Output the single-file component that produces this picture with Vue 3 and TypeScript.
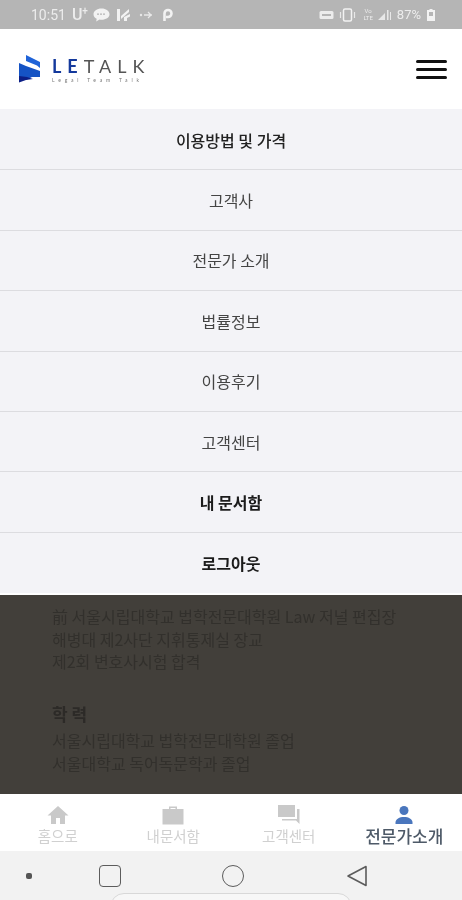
<script setup lang="ts">
const menu = [
  { label: '이용방법 및 가격', cls: 'medium' },
  { label: '고객사', cls: '' },
  { label: '전문가 소개', cls: '' },
  { label: '법률정보', cls: '' },
  { label: '이용후기', cls: '' },
  { label: '고객센터', cls: '' },
  { label: '내 문서함', cls: 'bold' },
  { label: '로그아웃', cls: 'bold' },
]
const career = ['前 서울시립대학교 법학전문대학원 Law 저널 편집장', '해병대 제2사단 지휘통제실 장교', '제2회 변호사시험 합격']
const school = ['서울시립대학교 법학전문대학원 졸업', '서울대학교 독어독문학과 졸업']
</script>

<template>
  <div class="screen">
    <div class="status">
      <div class="status-left">
        <span class="time">10:51</span>
        <span class="carrier">U<sup>+</sup></span>
        <svg width="17" height="14" viewBox="0 0 17 14"><path d="M8.500 0.500C4 0.500 0.500 3 0.500 6.200c0 2 1.300 3.600 3.200 4.500L3.200 13.500l3.300-2c.6.1 1.300.2 2 .2 4.500 0 8-2.300 8-5.500S13 0.500 8.500 0.500z" fill="#f2f2f2"/><path d="M4 6.200h9" stroke="#b5b5b5" stroke-width="1.200" stroke-dasharray="2 1"/></svg>
        <svg class="gap-xs" width="15" height="14" viewBox="0 0 15 14"><path d="M1 1h3v12H1zM5 8l8-7v3l-8 7zM8 9l6-3v2.500l-3 1.500v3H8z" fill="#f2f2f2"/></svg>
        <svg class="gap-s" width="15" height="10" viewBox="0 0 15 10"><circle cx="2" cy="5" r="1.200" fill="#e8e8e8"/><path d="M5 5h8M9 2l3 3-3 3" stroke="#e8e8e8" stroke-width="1.300" fill="none"/></svg>
        <svg class="gap-s" width="11" height="14" viewBox="0 0 11 14"><path d="M2.500 13V5.500a3.500 3.500 0 1 1 3.500 3.500H4" stroke="#f2f2f2" stroke-width="2.600" fill="none"/></svg>
      </div>
      <div class="status-right">
        <svg width="15" height="10" viewBox="0 0 15 10"><rect x="0.500" y="1" width="14" height="8" rx="1.500" fill="#ececec"/><rect x="3" y="4" width="9" height="2" fill="#b5b5b5"/></svg>
        <svg width="17" height="14" viewBox="0 0 17 14"><rect x="4.500" y="1" width="8" height="12" rx="1.500" fill="none" stroke="#f2f2f2" stroke-width="1.500"/><path d="M1.500 4v6M15.500 4v6" stroke="#e8e8e8" stroke-width="1.200"/></svg>
        <span class="lte">Vo<br>LTE</span>
        <svg width="15" height="12" viewBox="0 0 15 12"><path d="M1 11l7-7v7zM10 1h1.500v10H10zM13 3h1v8h-1z" fill="#e8e8e8"/></svg>
        <span class="pct">87%</span>
        <svg width="10" height="14" viewBox="0 0 10 14"><path d="M3.500 1h3v1H9v11H1V2h2.500z" fill="#f2f2f2"/><rect x="3" y="4" width="4" height="4" fill="#b5b5b5"/></svg>
      </div>
    </div>

    <header class="header">
      <div class="logo">
        <svg width="24" height="28" viewBox="0 0 24 28">
          <path d="M8 0l14 7v6l-3-2.500L8 6z" fill="#1f63d8"/>
          <path d="M1 8l7 3 14 5v6h-8l-6 3-7-3z" fill="#1553c4"/>
          <path d="M1 21l8 1 6 2-7 1-7 2.500z" fill="#0c1f86"/>
        </svg>
        <div class="logo-text">
          <div class="word"><b>LE</b><span>TALK</span></div>
          <div class="tag">Legal Team Talk</div>
        </div>
      </div>
      <div class="burger"><i></i><i></i><i></i></div>
    </header>

    <nav class="menu">
      <a v-for="m in menu" :key="m.label" class="row" :class="m.cls">{{ m.label }}</a>
    </nav>

    <section class="dim">
      <p v-for="t in career" :key="t">{{ t }}</p>
      <h3>학 력</h3>
      <p v-for="t in school" :key="t">{{ t }}</p>
    </section>

    <div class="tabs">
      <div class="tab">
        <svg width="22" height="20" viewBox="0 0 22 20"><path d="M11 1L0.500 10.500H4V19h5v-6h4v6h5v-8.500h3.500z" fill="#c9c9c9"/></svg>
        <span>홈으로</span>
      </div>
      <div class="tab">
        <svg width="24" height="20" viewBox="0 0 24 20"><path d="M8 4V1.500h8V4h6.500v15.500h-21V4zM9.500 4h5V3h-5z" fill="#c9c9c9" fill-rule="evenodd"/></svg>
        <span>내문서함</span>
      </div>
      <div class="tab">
        <svg width="24" height="20" viewBox="0 0 24 20"><path d="M1 0h17v12H1z" fill="#c9c9c9"/><path d="M20 4h2.500v15L19 15.500H5V14h15z" fill="#c9c9c9"/></svg>
        <span>고객센터</span>
      </div>
      <div class="tab active">
        <svg width="20" height="20" viewBox="0 0 20 20"><circle cx="10" cy="5.500" r="4.500" fill="#4a76bd"/><path d="M1.500 17.500c0-3.500 4-5.500 8.500-5.500s8.500 2 8.500 5.500V19h-17z" fill="#4a76bd"/></svg>
        <span>전문가소개</span>
      </div>
    </div>

    <div class="softkeys">
      <div class="key"><i class="dot"></i></div>
      <div class="key"><i class="square"></i></div>
      <div class="key"><i class="circle"></i></div>
      <div class="key">
        <svg width="22" height="22" viewBox="0 0 22 22"><path d="M20 1.500v19L2 11z" fill="none" stroke="#5c5c5c" stroke-width="1.600" stroke-linejoin="round"/></svg>
      </div>
      <div class="pill"></div>
    </div>
  </div>
</template>

<style scoped>
.screen {
  width: 462px;
  height: 900px;
  display: flex;
  flex-direction: column;
  overflow: hidden;
  font-family: "Noto Sans CJK KR", "Noto Sans", sans-serif;
  filter: blur(0.5px);
}

.status {
  height: 29px;
  flex: none;
  background: #b5b5b5;
  display: flex;
  align-items: center;
  justify-content: space-between;
  padding: 0 26px 0 31px;
  color: #ececec;
}
.status-left,
.status-right {
  display: flex;
  align-items: center;
  gap: 5px;
}
.time {
  font: 14px "Roboto", sans-serif;
  margin-right: 1px;
}
.carrier {
  font: 500 16px "Roboto", sans-serif;
}
.carrier sup {
  font-size: 10px;
  line-height: 0;
}
.gap-xs {
  margin-left: 1px;
}
.gap-s {
  margin-left: 3px;
}
.lte {
  font: 6px/7px "Roboto", sans-serif;
  text-align: center;
  margin: 0 -1px 2px 2px;
}
.pct {
  font: 13px "Roboto", sans-serif;
}

.header {
  height: 80px;
  flex: none;
  background: #fff;
  display: flex;
  align-items: center;
  justify-content: space-between;
  padding: 0 15px 0 18px;
}
.logo {
  display: flex;
  align-items: center;
  gap: 10px;
}
.logo-text {
  margin-top: 2px;
}
.word {
  font: 400 18px/18px "Lato", sans-serif;
  letter-spacing: 6px;
  color: #555;
}
.word b {
  font-weight: 700;
  color: #14399c;
}
.tag {
  font: 5px/7px "Lato", sans-serif;
  letter-spacing: 3.800px;
  color: #777;
  margin-top: 2px;
}
.burger {
  width: 31px;
  display: flex;
  flex-direction: column;
  gap: 5px;
}
.burger i {
  display: block;
  height: 3px;
  border-radius: 2px;
  background: #111;
}

.menu {
  flex: none;
  height: 483px;
  padding-top: 1px;
  background: #f3f3f7;
  border-bottom: 2px solid #fff;
  box-sizing: content-box;
  display: grid;
  grid-template-rows: repeat(8, 1fr);
}
.row {
  display: flex;
  align-items: center;
  justify-content: center;
  font-size: 16px;
  color: #444;
  border-bottom: 1.500px solid #dcdce0;
}
.row:last-child {
  border-bottom: 0;
}
.medium {
  font-weight: 500;
  color: #222;
}
.bold {
  font-weight: 700;
  color: #1c1c1c;
}

.dim {
  flex: 1;
  min-height: 0;
  overflow: hidden;
  background: #423f3a;
  padding: 10px 0 0 52px;
  color: #32302c;
  font-size: 16px;
}
.dim p {
  margin: 0;
  height: 22.700px;
  line-height: 22.700px;
  white-space: nowrap;
}
.dim h3 {
  margin: 30px 0 4px;
  height: 22px;
  line-height: 22px;
  font-size: 17px;
  font-weight: 700;
  color: #2c2a27;
}

.tabs {
  height: 57px;
  flex: none;
  background: #fff;
  display: grid;
  grid-template-columns: repeat(4, 1fr);
}
.tab {
  display: flex;
  flex-direction: column;
  align-items: center;
  padding-top: 11px;
  color: #d0d0d0;
  font-size: 14.500px;
  line-height: 18px;
}
.tab svg {
  margin-bottom: 2px;
}
.tab span {
  white-space: nowrap;
}
.tab.active {
  color: #4e5a68;
  font-size: 17px;
  font-weight: 500;
}

.softkeys {
  position: relative;
  height: 49px;
  flex: none;
  background: #f2f2f2;
  display: grid;
  grid-template-columns: 58px 104px 142px 106px;
  align-items: center;
  overflow: hidden;
}
.key {
  display: flex;
  justify-content: center;
}
.dot {
  width: 6px;
  height: 6px;
  border-radius: 2px;
  background: #555;
}
.square {
  width: 20px;
  height: 20px;
  border: 1.500px solid #5c5c5c;
  border-radius: 4px;
}
.circle {
  width: 20px;
  height: 20px;
  border: 1.500px solid #5c5c5c;
  border-radius: 50%;
}
.pill {
  position: absolute;
  left: 110px;
  top: 42px;
  width: 242px;
  height: 30px;
  box-sizing: border-box;
  border: 1px solid #d8d8d8;
  border-radius: 14px;
  background: #f7f7f7;
}
</style>
